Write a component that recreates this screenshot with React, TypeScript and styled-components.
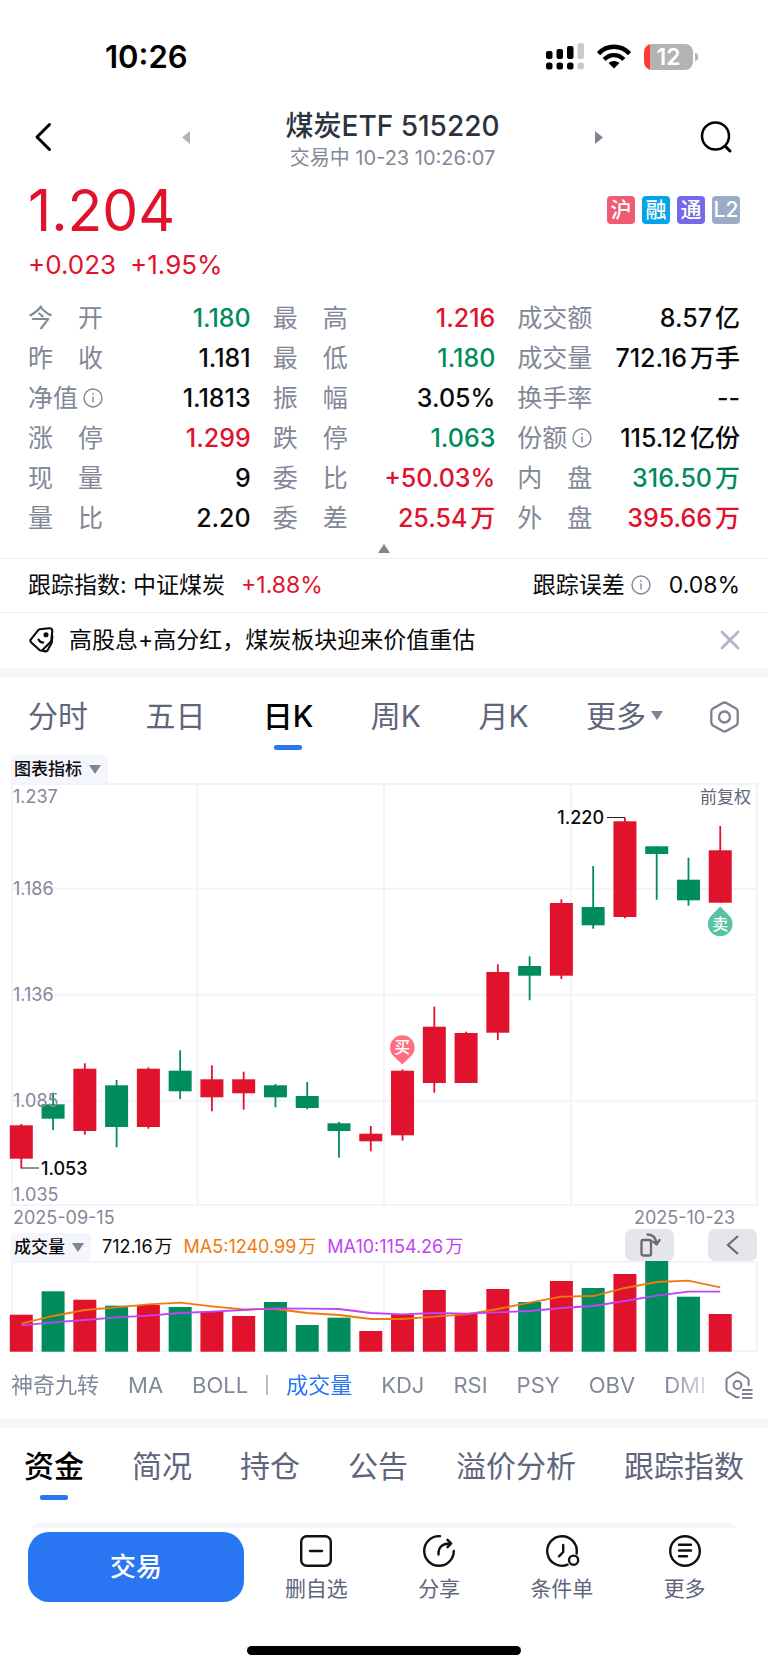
import React from "react";
import styled, { createGlobalStyle } from "styled-components";

const c = {
  red: "#e1122c",
  green: "#018c5d",
  ink: "#0a0a0c",
  title: "#2b333f",
  muted: "#838899",
  slate: "#5f657c",
  blue: "#2a76f2",
  band: "#f4f6fb",
  line: "#f2f4fa",
  orange: "#ee7a0c",
  purple: "#c242f5",
};

const GlobalStyle = createGlobalStyle`
  *, *::before, *::after { box-sizing: border-box; }
  body {
    margin: 0;
    background: #fff;
    color: ${c.ink};
    font-family: Inter, "Noto Sans CJK SC", sans-serif;
  }
  button {
    margin: 0;
    padding: 0;
    border: 0;
    background: none;
    color: inherit;
    font: inherit;
    cursor: pointer;
  }
  svg { display: block; flex: none; }
`;

type Tone = "red" | "green" | "ink";

const Page = styled.main`
  display: flex;
  flex-direction: column;
  width: 100%;
`;

/* ---------- status bar ---------- */

const StatusBar = styled.div`
  display: flex;
  align-items: center;
  justify-content: space-between;
  padding: 40px 70px 0 105px;
  height: 73px;
`;

const Clock = styled.time`
  font-size: 31px;
  line-height: 32px;
  font-weight: 600;
  color: #000;
`;

const StatusIcons = styled.div`
  display: flex;
  align-items: center;
  gap: 13px;
`;

const Battery = styled.div`
  display: flex;
  align-items: center;
  gap: 2px;
`;

const BatteryBody = styled.div`
  width: 49px;
  height: 26px;
  border-radius: 8px;
  background: linear-gradient(to right, #ff3b30 6px, #b3b3b3 6px);
  color: #fff;
  font-size: 23px;
  line-height: 26px;
  font-weight: 600;
  text-align: center;
`;

const BatteryNub = styled.div`
  width: 3px;
  height: 8px;
  border-radius: 0 3px 3px 0;
  background: #b3b3b3;
`;

/* ---------- header ---------- */

const Header = styled.header`
  display: grid;
  grid-template-columns: 162px 1fr 145px;
  align-items: center;
  margin-top: 31px;
  padding: 0 28px;
  height: 68px;
`;

const HeaderSide = styled.div<{ $end?: boolean }>`
  display: flex;
  align-items: center;
  justify-content: space-between;
  padding: ${(p) => (p.$end ? "0 7px 2px 0" : "0 0 2px 4px")};
`;

const TitleBlock = styled.div`
  display: flex;
  flex-direction: column;
  align-items: center;
  padding-top: 4px;
  white-space: nowrap;
`;

const Title = styled.h1`
  margin: 0;
  font-size: 28px;
  line-height: 36px;
  font-weight: 500;
  color: ${c.title};
`;

const Subtitle = styled.p`
  margin: 0;
  font-size: 20px;
  line-height: 28px;
  color: ${c.muted};
`;

/* ---------- quote ---------- */

const Quote = styled.section`
  display: flex;
  justify-content: space-between;
  padding: 6px 28px 0;
`;

const Price = styled.div`
  font-size: 57px;
  line-height: 66px;
  color: ${c.red};
`;

const Change = styled.div`
  display: flex;
  gap: 14px;
  font-size: 26px;
  line-height: 42px;
  color: ${c.red};
`;

const Badges = styled.div`
  display: flex;
  gap: 7px;
  padding-top: 18px;
`;

const Badge = styled.span<{ $bg: string }>`
  width: 28px;
  height: 28px;
  border-radius: 4px;
  background: ${(p) => p.$bg};
  color: #fff;
  font-size: 21px;
  line-height: 28px;
  font-weight: 500;
  text-align: center;
`;

const Stats = styled.dl`
  display: grid;
  grid-template-columns: repeat(3, 1fr);
  column-gap: 22px;
  margin: 12px 0 0;
  padding: 0 28px;
`;

const Stat = styled.div`
  display: flex;
  justify-content: space-between;
  font-size: 25px;
  line-height: 40px;
  white-space: pre;
`;

const StatLabel = styled.dt`
  display: flex;
  align-items: center;
  gap: 5px;
  color: ${c.muted};
`;

const StatValue = styled.dd<{ $tone: Tone }>`
  display: flex;
  gap: 3px;
  margin: 0;
  font-weight: 500;
  color: ${(p) => c[p.$tone]};
`;

const CollapseButton = styled.button`
  display: flex;
  align-items: center;
  justify-content: center;
  height: 20px;
`;

/* ---------- info rows ---------- */

const InfoRow = styled.div<{ $h: number }>`
  display: flex;
  align-items: center;
  justify-content: space-between;
  height: ${(p) => p.$h}px;
  padding: 0 28px 2px;
  border-top: 1px solid #eceff7;
  font-size: 23px;
  line-height: 32px;
`;

const InfoGroup = styled.div<{ $gap: number }>`
  display: flex;
  align-items: center;
  gap: ${(p) => p.$gap}px;
`;

const Up = styled.span`
  color: ${c.red};
`;

const Band = styled.div`
  height: 10px;
  background: ${c.band};
`;

/* ---------- tab strips ---------- */

const PeriodBar = styled.div`
  display: flex;
  align-items: center;
  gap: 47px;
  height: 77px;
  padding: 0 29px 0 28px;
`;

const PeriodTabs = styled.nav`
  flex: 1;
  display: flex;
  align-items: center;
  justify-content: space-between;
`;

const SectionTabs = styled.nav`
  display: flex;
  align-items: flex-start;
  gap: 48px;
  height: 79px;
  padding: 0 24px;
  overflow: hidden;
`;

const Tab = styled.button<{ $active?: boolean }>`
  position: relative;
  display: flex;
  align-items: center;
  gap: 5px;
  height: 77px;
  flex: none;
  padding-bottom: 2px;
  font-size: 30px;
  line-height: 44px;
  white-space: nowrap;
  font-weight: ${(p) => (p.$active ? 500 : 400)};
  color: ${(p) => (p.$active ? "#000" : c.slate)};

  &::after {
    content: "";
    display: ${(p) => (p.$active ? "block" : "none")};
    position: absolute;
    left: calc(50% - 14px);
    bottom: 5px;
    width: 28px;
    height: 5px;
    border-radius: 2px;
    background: ${c.blue};
  }
`;

/* ---------- charts ---------- */

const Toolbar = styled.div<{ $h: number }>`
  display: flex;
  align-items: flex-end;
  justify-content: space-between;
  height: ${(p) => p.$h}px;
  padding: 0 11px;
`;

const Legend = styled.div`
  display: flex;
  align-items: center;
  gap: 11px;
  font-size: 18px;
  line-height: 28px;
`;

const LegendItem = styled.span<{ $color: string }>`
  display: flex;
  gap: 2px;
  color: ${(p) => p.$color};
`;

const Chip = styled.button`
  display: flex;
  align-items: center;
  gap: 7px;
  height: 28px;
  padding: 0 7px 0 3px;
  border-radius: 4px 4px 0 0;
  background: ${c.band};
  font-size: 17px;
  line-height: 28px;
  font-weight: 500;
`;

const ToolButtons = styled.div`
  display: flex;
  gap: 34px;
`;

const ToolButton = styled.button`
  display: flex;
  align-items: center;
  justify-content: center;
  width: 49px;
  height: 32px;
  border-radius: 7px;
  background: #e5e6ea;
`;

const ChartSvg = styled.svg`
  width: 100%;
  height: auto;
  font-family: Inter, "Noto Sans CJK SC", sans-serif;
`;

const Dates = styled.div`
  display: flex;
  justify-content: space-between;
  padding: 0 33px 0 13px;
  font-size: 18px;
  line-height: 22px;
  color: ${c.muted};
`;

const IndicatorBar = styled.div`
  display: flex;
  align-items: center;
  gap: 16px;
  height: 65px;
  padding: 0 15px 2px 11px;
`;

const IndicatorList = styled.div`
  flex: 1;
  min-width: 0;
  display: flex;
  align-items: center;
  gap: 29px;
  overflow: hidden;
  mask-image: linear-gradient(to right, #000 calc(100% - 40px), rgba(0, 0, 0, 0.2));
`;

const Indicator = styled.button<{ $active?: boolean }>`
  flex: none;
  font-size: 22px;
  line-height: 36px;
  color: ${(p) => (p.$active ? c.blue : c.muted)};
`;

const Divider = styled.span`
  flex: none;
  width: 2px;
  height: 20px;
  margin: 0 -11px;
  background: #b9bdca;
`;

/* ---------- bottom ---------- */

const CardEdge = styled.div`
  height: 5px;
  margin: 16px 32px 0;
  border-radius: 8px 8px 0 0;
  background: ${c.band};
`;

const Footer = styled.footer`
  display: flex;
  align-items: stretch;
  gap: 11px;
  padding: 4px 22px 0 28px;
`;

const TradeButton = styled.button`
  flex: 216 1 0;
  height: 70px;
  border-radius: 21px;
  background: ${c.blue};
  color: #fff;
  font-size: 26px;
  line-height: 40px;
  font-weight: 500;
`;

const Actions = styled.div`
  flex: 491 1 0;
  display: grid;
  grid-template-columns: repeat(4, 1fr);
`;

const Action = styled.button`
  display: flex;
  flex-direction: column;
  align-items: center;
  justify-content: space-between;
  padding-top: 3px;
  font-size: 21px;
  line-height: 26px;
  color: ${c.slate};
`;

const HomeBar = styled.div`
  align-self: center;
  width: 274px;
  height: 9px;
  margin: 44px 0 14px;
  border-radius: 5px;
  background: #000;
`;

/* ---------- icons ---------- */

const TRI = {
  up: "0,9 6,0 12,9",
  down: "0,0 12,0 6,9",
};

const Triangle = ({ dir, color = "#7f8494" }: { dir: "up" | "down"; color?: string }) => (
  <svg width="12" height="9" viewBox="0 0 12 9">
    <polygon points={TRI[dir]} fill={color} />
  </svg>
);

const SideTriangle = ({ left }: { left?: boolean }) => (
  <svg width="8" height="13" viewBox="0 0 8 13">
    <polygon points={left ? "8,0 8,13 0,6.5" : "0,0 0,13 8,6.5"} fill={left ? "#b3b3b5" : "#7f8494"} />
  </svg>
);

const InfoIcon = () => (
  <svg width="20" height="20" viewBox="0 0 20 20" fill="none" stroke={c.muted} strokeWidth="1.4">
    <circle cx="10" cy="10" r="9" />
    <path d="M10 8.5V14.5M10 5V6.8" />
  </svg>
);

const SignalIcon = () => (
  <svg width="38" height="27" viewBox="0 0 38 27" fill="#000">
    <rect x="0" y="8" width="6.5" height="8" rx="2" />
    <rect x="10.500" y="6" width="6.500" height="10" rx="2" />
    <rect x="21" y="3" width="6.500" height="13" rx="2" />
    <rect x="31.500" y="0" width="6.500" height="16" rx="2" fill="#cbcbcb" />
    <rect x="0" y="19.500" width="6.500" height="7" rx="2.500" />
    <rect x="10.500" y="19.500" width="6.500" height="7" rx="2.500" />
    <rect x="21" y="19.500" width="6.500" height="7" rx="2.500" />
    <rect x="31.500" y="19.500" width="6.500" height="7" rx="2.500" fill="#cbcbcb" />
  </svg>
);

const WifiIcon = () => (
  <svg width="34" height="25" viewBox="0 0 34 25" fill="none" stroke="#000" strokeWidth="4.400">
    <path d="M1.500 9.700C10 0.500 24 0.500 32.500 9.700" />
    <path d="M7.200 15.500C12.500 9.600 21.500 9.600 26.800 15.500" />
    <path d="M17 24.500L11.500 19C14.500 16.200 19.500 16.200 22.500 19Z" fill="#000" stroke="none" />
  </svg>
);

const HexIcon = () => (
  <svg width="29" height="32" viewBox="0 0 29 32" fill="none" stroke="#7c8192" strokeWidth="2.300" strokeLinejoin="round">
    <path d="M12.700 2Q14.500 1 16.300 2L26 7.600Q27.700 8.600 27.700 10.500V21.500Q27.700 23.400 26 24.400L16.300 30Q14.500 31 12.700 30L3 24.400Q1.300 23.400 1.300 21.500V10.500Q1.300 8.600 3 7.600Z" />
    <circle cx="14.500" cy="16" r="5.500" />
  </svg>
);

const HexListIcon = () => (
  <svg width="28" height="28" viewBox="0 0 28 28" fill="none" stroke="#7c8192" strokeWidth="2" strokeLinejoin="round">
    <path d="M14.500 26L11.500 26.300L2.600 20.800Q1.500 20 1.500 18.800V9Q1.500 7.800 2.600 7L11 1.700Q12.500 1 14 1.700L22.500 7Q23.600 7.800 23.600 9V15" />
    <circle cx="12.500" cy="14" r="3.900" />
    <path d="M17 19H27.500M17 23H27.500M17 27H27.500" />
  </svg>
);

const TagIcon = () => (
  <svg width="26" height="26" viewBox="-1 0 26 26" fill="none" stroke="#0a0a0c" strokeWidth="2.100" strokeLinejoin="round" strokeLinecap="round">
    <path d="M10.800 2.200L20 1.300Q23.300 1.100 23.300 4L22.300 13.300Q22.200 14.300 21.500 15L13.500 23Q12 24.300 10.500 23L2 15.300Q0.700 13.800 2 12.300L9 3.300Q9.800 2.300 10.800 2.200Z" />
    <path d="M23.300 9L22.800 15.500L18.500 23.500Q17 25.200 13.500 23.500" />
    <circle cx="17" cy="7.800" r="1.900" fill="#0a0a0c" stroke="none" />
    <circle cx="17" cy="7.800" r="1.800" strokeWidth="1.500" />
    <path d="M9.500 12.500Q10.800 15.500 14.300 15.500" />
  </svg>
);

const ACTION_ICONS: Record<string, React.ReactNode> = {
  remove: (
    <>
      <rect x="1.200" y="1.200" width="29.600" height="29.600" rx="5.500" />
      <path d="M10 16H22" />
    </>
  ),
  share: (
    <>
      <path d="M17 1.200A14.800 14.800 0 1 0 30.800 16" />
      <path d="M15.500 19.500C15.200 12.500 19 8.500 27 8.500" />
      <path d="M24.500 4.800L28.200 8.500L24.500 12.200" />
    </>
  ),
  timer: (
    <>
      <path d="M21.600 29.700A14.800 14.800 0 1 1 30.600 18.500" />
      <path d="M17.200 10V17L13 21.300" />
      <circle cx="27.600" cy="25.200" r="4.600" />
    </>
  ),
  more: (
    <>
      <circle cx="16" cy="16" r="14.800" />
      <path d="M10 9.700H22M10 15.500H22M10 21.300H18" />
    </>
  ),
};

const ActionIcon = ({ name }: { name: string }) => (
  <svg width="32" height="32" viewBox="0 0 32 32" overflow="visible" fill="none" stroke="#111" strokeWidth="2.400" strokeLinecap="round" strokeLinejoin="round">
    {ACTION_ICONS[name]}
  </svg>
);

/* ---------- data ---------- */

type StatDef = { label: string; value: string; unit?: string; tone?: Tone; info?: boolean };

const STATS: StatDef[] = [
  { label: "今　开", value: "1.180", tone: "green" },
  { label: "最　高", value: "1.216", tone: "red" },
  { label: "成交额", value: "8.57", unit: "亿" },
  { label: "昨　收", value: "1.181" },
  { label: "最　低", value: "1.180", tone: "green" },
  { label: "成交量", value: "712.16", unit: "万手" },
  { label: "净值", value: "1.1813", info: true },
  { label: "振　幅", value: "3.05%" },
  { label: "换手率", value: "--" },
  { label: "涨　停", value: "1.299", tone: "red" },
  { label: "跌　停", value: "1.063", tone: "green" },
  { label: "份额", value: "115.12", unit: "亿份", info: true },
  { label: "现　量", value: "9" },
  { label: "委　比", value: "+50.03%", tone: "red" },
  { label: "内　盘", value: "316.50", unit: "万", tone: "green" },
  { label: "量　比", value: "2.20" },
  { label: "委　差", value: "25.54", unit: "万", tone: "red" },
  { label: "外　盘", value: "395.66", unit: "万", tone: "red" },
];

/* Each candle: rising flag, high, body top, body bottom, low, volume bar top, MA5, MA10. */
const CANDLES: [boolean, number, number, number, number, number, number, number][] = [
  [true, 341, 342.3, 375.7, 385.5, 53.7, 62.7, 64.3],
  [false, 309.7, 321.3, 335.7, 347, 30.3, 55, 61.3],
  [true, 280.3, 285.7, 348, 351.7, 38.7, 49, 59],
  [false, 297, 302.3, 344, 364.3, 44.7, 46.3, 56.3],
  [true, 284.3, 285.7, 344, 345.7, 44, 43.3, 54.7],
  [false, 267.3, 287.7, 308.3, 316, 46, 41.7, 52],
  [true, 282.3, 296.3, 314.3, 328.3, 50.7, 45.3, 50.7],
  [true, 288.7, 296.3, 310.3, 326.7, 55, 48.3, 49],
  [false, 301, 302.3, 314.3, 324.3, 41, 48, 47.3],
  [false, 299, 313, 325, 326.3, 64, 52, 47.7],
  [false, 339, 340.3, 348, 374.7, 56.7, 54, 48],
  [true, 343, 350.7, 358.3, 368.3, 70, 58, 52],
  [true, 286.3, 287.7, 352.3, 357.7, 53.7, 58, 53.3],
  [true, 223.7, 243.7, 300, 309.7, 29, 55.7, 52],
  [true, 248.7, 250, 300, 300, 53, 53.3, 52.7],
  [true, 181.3, 189, 249.7, 257, 28, 48, 51.3],
  [false, 173.3, 183, 192.7, 217.3, 41, 41.7, 50],
  [true, 116.3, 120, 192.7, 196, 20, 35.7, 47],
  [false, 83, 124, 142.3, 145.7, 27, 35, 45],
  [true, 35, 38.3, 134, 135.3, 13, 27, 40],
  [false, 63.3, 63.3, 71, 116.7, 0, 21, 34.7],
  [false, 74.7, 96.7, 117.3, 122.7, 35.7, 19.7, 30.7],
  [true, 43, 67.3, 119.7, 119.7, 53, 26.3, 30.7],
];

const xAt = (i: number) => 21.3 + i * 31.77;
const points = (col: 6 | 7) => CANDLES.map((d, i) => `${xAt(i).toFixed(1)},${d[col]}`).join(" ");
const fillOf = (up: boolean) => (up ? c.red : c.green);

const PriceChart = () => (
  <ChartSvg viewBox="0 0 768 424" role="img" aria-label="日K">
    <g fill="none" stroke={c.line} strokeWidth="2">
      <rect x="12" y="1" width="745" height="421" />
      <path d="M12 105.700H757M12 211.700H757M12 317.700H757M197.500 1V422M384 1V422M571 1V422" />
    </g>
    {CANDLES.map(([up, high, top, bottom, low], i) => (
      <g key={i} fill={fillOf(up)}>
        <rect x={xAt(i) - 0.9} y={high} width="1.800" height={low - high} />
        <rect x={xAt(i) - 11.5} y={top} width="23" height={bottom - top} />
      </g>
    ))}
    <g fontSize="18" fill={c.muted}>
      <text x="13" y="20">1.237</text>
      <text x="13" y="112">1.186</text>
      <text x="13" y="218">1.136</text>
      <text x="13" y="324">1.085</text>
      <text x="13" y="418">1.035</text>
      <text x="751" y="20" fontSize="17" fill={c.slate} textAnchor="end">前复权</text>
    </g>
    <g stroke="#222" strokeWidth="1">
      <path d="M21.500 385H39M607 34.500H625" />
    </g>
    <g fontSize="18" fontWeight="500" fill={c.ink}>
      <text x="41" y="391.500">1.053</text>
      <text x="604" y="41" textAnchor="end">1.220</text>
    </g>
    <path d="M402.300 281.500L392.500 272A12.300 12.300 0 1 1 412.100 272Z" fill="#ff6f83" />
    <path d="M720.200 123.500L710.400 133.500A12.300 12.300 0 1 0 730 133.500Z" fill="#57c3a0" />
    <g fontSize="16" fontWeight="500" fill="#fff" textAnchor="middle">
      <text x="402.300" y="270">买</text>
      <text x="720.200" y="146.500">卖</text>
    </g>
  </ChartSvg>
);

const VolumeChart = () => (
  <ChartSvg viewBox="0 0 768 92" role="img" aria-label="成交量">
    <g fill="none" stroke={c.line} strokeWidth="2">
      <rect x="12" y="1" width="745" height="89" />
      <path d="M197.500 1V90M384 1V90M571 1V90" />
    </g>
    {CANDLES.map((d, i) => (
      <rect key={i} x={xAt(i) - 11.5} y={d[5]} width="23" height={90.7 - d[5]} fill={fillOf(d[0])} />
    ))}
    <polyline points={points(6)} fill="none" stroke={c.orange} strokeWidth="1.800" />
    <polyline points={points(7)} fill="none" stroke={c.purple} strokeWidth="1.800" />
  </ChartSvg>
);

const PERIODS = ["分时", "五日", "日K", "周K", "月K"];
const SECTIONS = ["资金", "简况", "持仓", "公告", "溢价分析", "跟踪指数"];
const OVERLAYS = ["神奇九转", "MA", "BOLL"];
const INDICATORS = ["成交量", "KDJ", "RSI", "PSY", "OBV", "DMI"];
const ACTIONS = [
  ["remove", "删自选"],
  ["share", "分享"],
  ["timer", "条件单"],
  ["more", "更多"],
];

export default function App() {
  return (
    <>
      <GlobalStyle />
      <Page>
        <StatusBar>
          <Clock>10:26</Clock>
          <StatusIcons>
            <SignalIcon />
            <WifiIcon />
            <Battery>
              <BatteryBody>12</BatteryBody>
              <BatteryNub />
            </Battery>
          </StatusIcons>
        </StatusBar>

        <Header>
          <HeaderSide>
            <button aria-label="返回">
              <svg width="20" height="30" viewBox="0 0 20 30" fill="none" stroke="#000" strokeWidth="3" strokeLinecap="round" strokeLinejoin="round">
                <path d="M17.500 2.500L5 15L17.500 27.500" />
              </svg>
            </button>
            <button aria-label="上一个">
              <SideTriangle left />
            </button>
          </HeaderSide>
          <TitleBlock>
            <Title>煤炭ETF 515220</Title>
            <Subtitle>交易中 10-23 10:26:07</Subtitle>
          </TitleBlock>
          <HeaderSide $end>
            <button aria-label="下一个">
              <SideTriangle />
            </button>
            <button aria-label="搜索">
              <svg width="34" height="34" viewBox="0 0 34 34" fill="none" stroke="#000" strokeWidth="2.500" strokeLinecap="round">
                <circle cx="16.500" cy="16" r="13.500" />
                <path d="M26.500 26.500L31 31" strokeWidth="3" />
              </svg>
            </button>
          </HeaderSide>
        </Header>

        <Quote>
          <div>
            <Price>1.204</Price>
            <Change>
              <span>+0.023</span>
              <span>+1.95%</span>
            </Change>
          </div>
          <Badges>
            <Badge $bg="#f05a73">沪</Badge>
            <Badge $bg="#06a3e8">融</Badge>
            <Badge $bg="#7668e6">通</Badge>
            <Badge $bg="#9aacc6">L2</Badge>
          </Badges>
        </Quote>

        <Stats>
          {STATS.map((s) => (
            <Stat key={s.label}>
              <StatLabel>
                {s.label}
                {s.info && <InfoIcon />}
              </StatLabel>
              <StatValue $tone={s.tone ?? "ink"}>
                <span>{s.value}</span>
                {s.unit && <span>{s.unit}</span>}
              </StatValue>
            </Stat>
          ))}
        </Stats>
        <CollapseButton aria-label="收起">
          <Triangle dir="up" />
        </CollapseButton>

        <InfoRow $h={54}>
          <InfoGroup $gap={16}>
            <span>跟踪指数: 中证煤炭</span>
            <Up>+1.88%</Up>
          </InfoGroup>
          <InfoGroup $gap={18}>
            <InfoGroup $gap={6}>
              跟踪误差
              <InfoIcon />
            </InfoGroup>
            <span>0.08%</span>
          </InfoGroup>
        </InfoRow>
        <InfoRow $h={56}>
          <InfoGroup $gap={15}>
            <TagIcon />
            <span>高股息+高分红，煤炭板块迎来价值重估</span>
          </InfoGroup>
          <button aria-label="关闭">
            <svg width="20" height="20" viewBox="0 0 20 20" stroke="#b0b5c3" strokeWidth="2.600" strokeLinecap="round">
              <path d="M2 2L18 18M18 2L2 18" />
            </svg>
          </button>
        </InfoRow>
        <Band />

        <PeriodBar>
          <PeriodTabs>
            {PERIODS.map((p) => (
              <Tab key={p} $active={p === "日K"}>
                {p}
              </Tab>
            ))}
            <Tab>
              更多
              <Triangle dir="down" />
            </Tab>
          </PeriodTabs>
          <button aria-label="图表设置">
            <HexIcon />
          </button>
        </PeriodBar>

        <Toolbar $h={28}>
          <Chip>
            图表指标
            <Triangle dir="down" />
          </Chip>
        </Toolbar>
        <PriceChart />
        <Dates>
          <span>2025-09-15</span>
          <span>2025-10-23</span>
        </Dates>
        <Toolbar $h={32}>
          <Legend>
            <Chip>
              成交量
              <Triangle dir="down" />
            </Chip>
            <LegendItem $color={c.ink}>
              <span>712.16</span>
              <span>万</span>
            </LegendItem>
            <LegendItem $color={c.orange}>
              <span>MA5:1240.99</span>
              <span>万</span>
            </LegendItem>
            <LegendItem $color={c.purple}>
              <span>MA10:1154.26</span>
              <span>万</span>
            </LegendItem>
          </Legend>
          <ToolButtons>
            <ToolButton aria-label="横屏">
              <svg width="22" height="24" viewBox="0 0 22 24" fill="none" stroke="#6b6b6e" strokeWidth="2.300" strokeLinejoin="round" strokeLinecap="round">
                <rect x="2.500" y="7" width="9.500" height="15.500" rx="1.500" />
                <path d="M8.500 1.500C13.500 1.500 17 4.500 17.500 11M14 8.500L17.500 11.500L20.500 7" />
              </svg>
            </ToolButton>
            <ToolButton aria-label="展开">
              <svg width="14" height="20" viewBox="0 0 14 20" fill="none" stroke="#6b6b6e" strokeWidth="2.200">
                <path d="M12 1L2 10L12 19" />
              </svg>
            </ToolButton>
          </ToolButtons>
        </Toolbar>
        <VolumeChart />

        <IndicatorBar>
          <IndicatorList>
            {OVERLAYS.map((t) => (
              <Indicator key={t}>{t}</Indicator>
            ))}
            <Divider />
            {INDICATORS.map((t) => (
              <Indicator key={t} $active={t === "成交量"}>
                {t}
              </Indicator>
            ))}
          </IndicatorList>
          <button aria-label="指标设置">
            <HexListIcon />
          </button>
        </IndicatorBar>
        <Band />

        <SectionTabs>
          {SECTIONS.map((s) => (
            <Tab key={s} $active={s === "资金"}>
              {s}
            </Tab>
          ))}
        </SectionTabs>
        <CardEdge />

        <Footer>
          <TradeButton>交易</TradeButton>
          <Actions>
            {ACTIONS.map(([icon, label]) => (
              <Action key={icon}>
                <ActionIcon name={icon} />
                {label}
              </Action>
            ))}
          </Actions>
        </Footer>
        <HomeBar />
      </Page>
    </>
  );
}
